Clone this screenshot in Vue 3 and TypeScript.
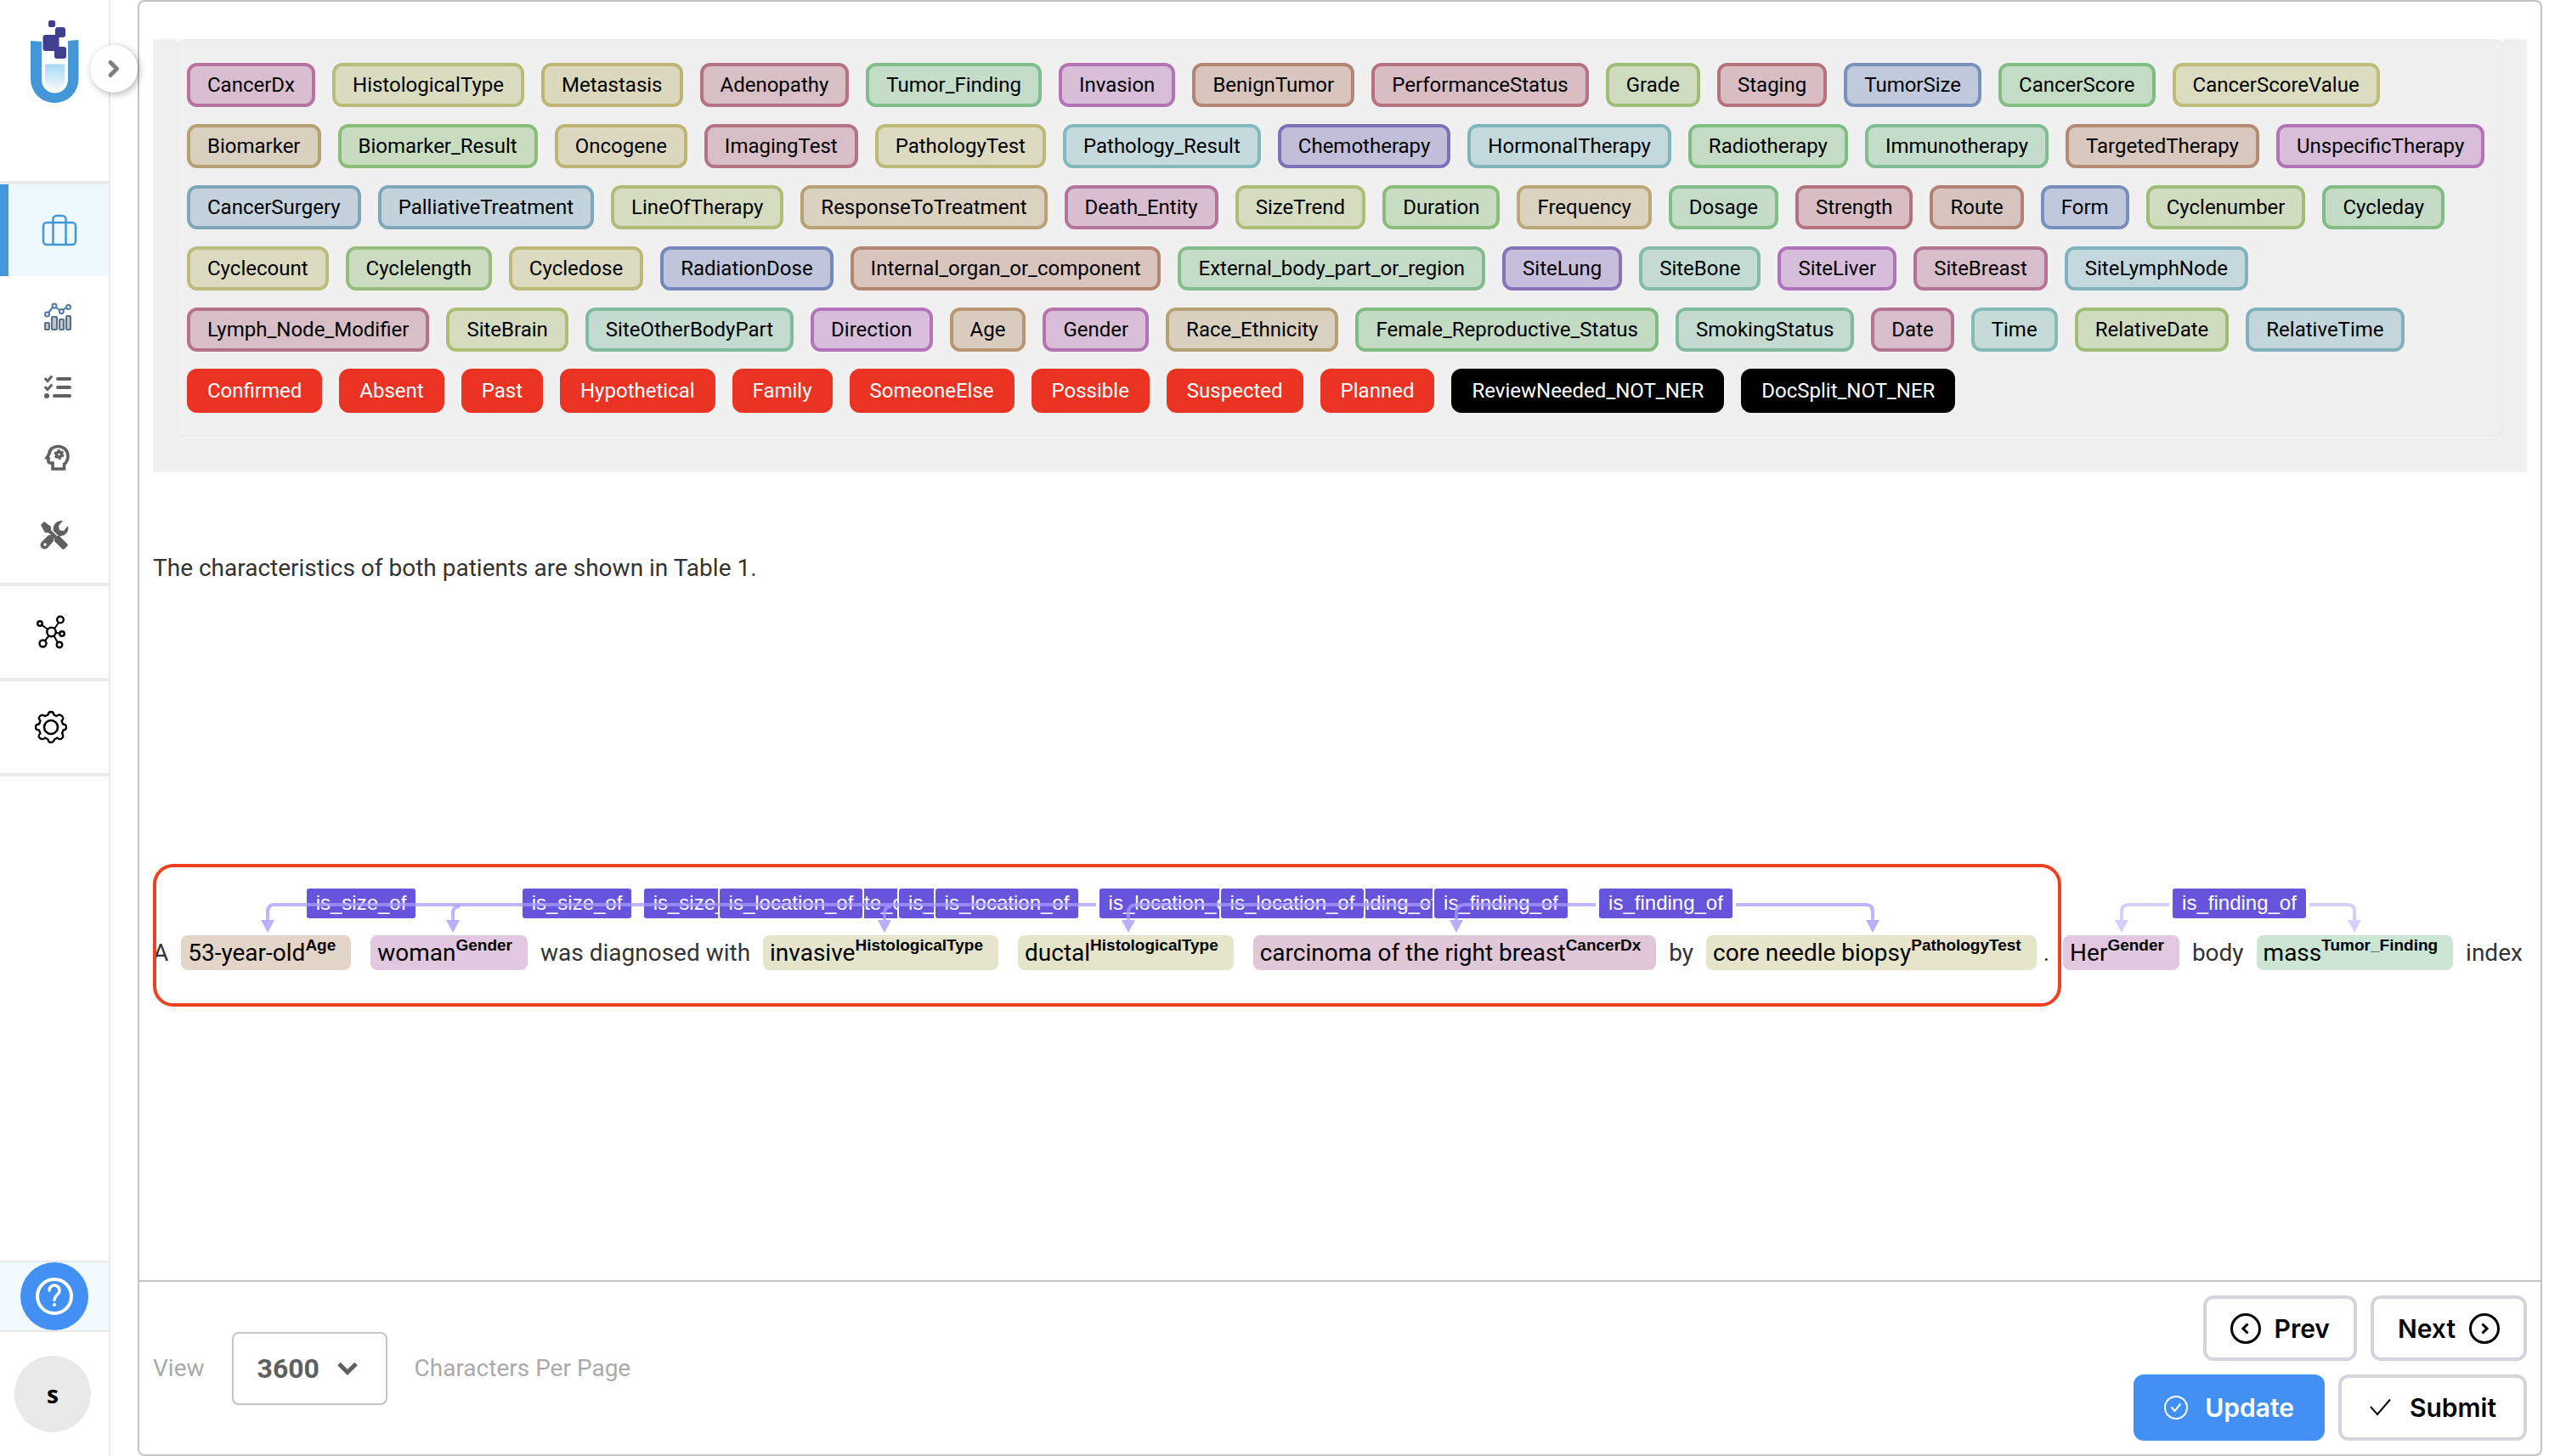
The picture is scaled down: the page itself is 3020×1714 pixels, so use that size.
<script setup lang="ts">
import { ref } from 'vue'

interface Label { name: string; tone: string }
interface Token { text: string; label?: string; tone?: string; tight?: boolean }
interface Relation { name: string; x: number; width: number }

const toLabels = (source: string): Label[] =>
  source.trim().split(/\s+/).map((entry) => {
    const [name, tone] = entry.split(':')
    return { name, tone: '#' + tone }
  })

const labels = toLabels(`
  CancerDx:b5739d HistologicalType:babd78 Metastasis:bdb574 Adenopathy:b57285 Tumor_Finding:82bd8c
  Invasion:b573b5 BenignTumor:b58573 PerformanceStatus:b5737f Grade:a0bd78 Staging:b5737c
  TumorSize:7892bd CancerScore:80bd82 CancerScoreValue:bdbd78 Biomarker:b8a075 Biomarker_Result:8cbd78
  Oncogene:bdb478 ImagingTest:b57386 PathologyTest:bdb978 Pathology_Result:82b9bd Chemotherapy:7b73b9
  HormonalTherapy:80b6bd Radiotherapy:80bd80 Immunotherapy:82bd92 TargetedTherapy:b58c73
  UnspecificTherapy:b573b7 CancerSurgery:80a6bb PalliativeTreatment:80a8bb LineOfTherapy:b0bd78
  ResponseToTreatment:b8a275 Death_Entity:b573a0 SizeTrend:acbd78 Duration:8abd7b Frequency:bba875
  Dosage:82bd8a Strength:b5737f Route:b58273 Form:788ebb Cyclenumber:a0bd78 Cycleday:82bb85
  Cyclecount:bdbb78 Cyclelength:96bd7b Cycledose:bdb978 RadiationDose:7588bb
  Internal_organ_or_component:b58573 External_body_part_or_region:82bb8c SiteLung:8673b9
  SiteBone:82bba8 SiteLiver:ae73bb SiteBreast:b57392 SiteLymphNode:80b2bd Lymph_Node_Modifier:b57388
  SiteBrain:acbd78 SiteOtherBodyPart:82bb9d Direction:b573bb Age:b89673 Gender:b573b2
  Race_Ethnicity:b8a075 Female_Reproductive_Status:80bb80 SmokingStatus:82bba0 Date:b57391
  Time:82bbb5 RelativeDate:a0bd78 RelativeTime:80b0bd
`)
const assertions = ['Confirmed', 'Absent', 'Past', 'Hypothetical', 'Family', 'SomeoneElse', 'Possible', 'Suspected', 'Planned']
const flags = ['ReviewNeeded_NOT_NER', 'DocSplit_NOT_NER']

const selected: Token[] = [
  { text: 'A' },
  { text: '53-year-old', label: 'Age', tone: '#e3d5c8' },
  { text: 'woman', label: 'Gender', tone: '#e1c7df' },
  { text: 'was diagnosed with' },
  { text: 'invasive', label: 'HistologicalType', tone: '#e4e5ca' },
  { text: 'ductal', label: 'HistologicalType', tone: '#e4e5ca' },
  { text: 'carcinoma of the right breast', label: 'CancerDx', tone: '#e1c8d8' },
  { text: 'by' },
  { text: 'core needle biopsy', label: 'PathologyTest', tone: '#e6e4cb', tight: true },
  { text: '.' },
]
const following: Token[] = [
  { text: 'Her', label: 'Gender', tone: '#e2c8e0' },
  { text: 'body' },
  { text: 'mass', label: 'Tumor_Finding', tone: '#cde5d3' },
  { text: 'index' },
]

// Later entries are painted over earlier ones.
const relations: Relation[] = [
  { name: 'is_size_of', x: 181, width: 128 },
  { name: 'is_size_of', x: 435, width: 128 },
  { name: 'is_size_of', x: 578, width: 128 },
  { name: 'is_date_of', x: 769, width: 132 },
  { name: 'is_location_of', x: 667, width: 168 },
  { name: 'is_finding_of', x: 878, width: 157 },
  { name: 'is_location_of', x: 921, width: 168 },
  { name: 'is_location_of', x: 1114, width: 168 },
  { name: 'is_finding_of', x: 1365, width: 157 },
  { name: 'is_location_of', x: 1257, width: 168 },
  { name: 'is_finding_of', x: 1508, width: 157 },
  { name: 'is_finding_of', x: 1702, width: 157 },
  { name: 'is_finding_of', x: 2377, width: 157 },
]
const heads = [135, 353, 861, 1148, 1534, 2024]
const paleHeads = [2317, 2591]

const pageSize = ref('3600')
</script>

<template>
  <div class="page">
    <aside class="sidebar">
      <a href="#" class="logo" aria-label="Home">
        <svg width="128" height="213" viewBox="0 0 128 213">
          <defs>
            <linearGradient id="tank" x1="0" y1="0" x2="0" y2="1">
              <stop offset="0" stop-color="#a6d8f5" /><stop offset="1" stop-color="#f2f9fe" />
            </linearGradient>
          </defs>
          <path d="M36 48L49 49V94a15.500 15.500 0 0 0 31 0V48L92.500 47V93a28.250 28.250 0 0 1-56.500 0Z" fill="#4397d7" />
          <path d="M53 75.500H76.300V93.500a11.650 11.650 0 0 1-23.300 0Z" fill="url(#tank)" />
          <g fill="#403f91">
            <rect x="57" y="24" width="8" height="8" rx="2" />
            <rect x="65" y="32" width="12" height="12" rx="3" />
            <rect x="50.500" y="41" width="19" height="19" rx="3" />
            <rect x="64" y="55" width="14" height="14" rx="3" />
          </g>
        </svg>
      </a>
      <nav class="nav">
        <a href="#" class="active" aria-label="Projects">
          <svg width="128" height="108" viewBox="0 0 128 108" fill="none" stroke="#4397d7" stroke-width="2.500">
            <rect x="51" y="45" width="38" height="26" rx="4" />
            <path d="M62.500 71V41a4 4 0 0 1 4-4h7a4 4 0 0 1 4 4V71" />
          </svg>
        </a>
        <div class="links">
          <a href="#" aria-label="Analytics">
            <svg width="128" height="84" viewBox="0 0 128 84" fill="none" stroke="#54708c" stroke-width="2">
              <g fill="#c4c4c8">
                <rect x="53" y="49" width="5" height="8" rx="1" /><rect x="61" y="42" width="6" height="15" rx="1" />
                <rect x="70" y="45" width="5" height="12" rx="1" /><rect x="78" y="41" width="5" height="16" rx="1" />
              </g>
              <g stroke="#4f78a6">
                <path d="M57 37l5-6M66 31l4 3M74 34l4-3" />
                <circle cx="55.500" cy="39" r="2.500" /><circle cx="64" cy="29" r="2.500" />
                <circle cx="72.300" cy="35.500" r="2.500" /><circle cx="80.500" cy="30.500" r="2.500" />
              </g>
            </svg>
          </a>
          <a href="#" aria-label="Tasks">
            <svg width="128" height="84" viewBox="0 0 128 84" fill="none" stroke="#606060" stroke-width="4" stroke-linecap="round">
              <path d="M68 31H82M68 41H82M64 51H82" />
              <path d="M53.500 31l2.500 2.500 4.500-5M53.500 41l2.500 2.500 4.500-5" stroke-width="3" />
              <circle cx="55" cy="51" r="3" fill="#606060" stroke="none" />
            </svg>
          </a>
          <a href="#" aria-label="Models">
            <svg width="128" height="84" viewBox="0 0 128 84">
              <path d="M62 53V46h-3a2 2 0 0 1-2-2V40.500l-2-.5 3-5C58 29.500 63 26.500 68.500 26.500c6.500 0 11.500 5 11.500 11.500 0 4.500-2 7.500-4.500 9.500v5.500Z" fill="none" stroke="#606060" stroke-width="3.600" />
              <circle cx="69.500" cy="36" r="3" fill="none" stroke="#606060" stroke-width="3.500" />
              <circle cx="69.500" cy="36" r="5" fill="none" stroke="#606060" stroke-width="2" stroke-dasharray="3 2.240" />
            </svg>
          </a>
          <a href="#" aria-label="Tools">
            <svg width="128" height="84" viewBox="0 0 128 84" fill="#606060">
              <path d="M48 35l4-4 8 6v4l7 7h3l9 9c1 1 1 2 0 3l-3 3c-1 1-2 1-3 0l-9-9v-3l-7-7h-4Z" />
              <path d="M74 30c-7-1-13 5-11 12l6 6c7 1 13-5 11-12l-5 6-5-1-1-5Z" />
              <path d="M60 47l3 3v4L56 62a4.800 4.800 0 0 1-7-7l8-8Z" />
              <circle cx="53" cy="58" r="1.700" fill="#fff" />
            </svg>
          </a>
        </div>
        <a href="#" class="section" aria-label="Relations">
          <svg width="128" height="108" viewBox="0 0 128 108" fill="none" stroke="#000" stroke-width="2.400">
            <circle cx="60.500" cy="54" r="5.200" /><circle cx="47" cy="44" r="2.800" /><circle cx="71" cy="39.500" r="3.800" />
            <circle cx="73" cy="56" r="2.800" /><circle cx="70" cy="69" r="3.300" /><circle cx="50.500" cy="67.500" r="4" />
            <path d="M49.500 46l7 5M69 43l-5 7M66 55l4 .5M63.500 58.500l4.500 8M57.500 58.500l-4.500 5.500" stroke-width="2" />
          </svg>
        </a>
        <a href="#" class="section" aria-label="Settings">
          <svg width="128" height="108" viewBox="0 0 128 108" fill="none" stroke="#000" stroke-width="2.600" stroke-linejoin="round">
            <circle cx="60" cy="54" r="8" />
            <path d="M56.500 39.500Q57 36 60 36T63.500 39.500L66.500 41Q70 38 73 41T72.500 46.500L74 50.500Q78 50.500 78 54T74.500 57.500L73 61.500Q75.500 64.500 73 67T67.500 66.500L64 68.500Q63 72 60 72T56.500 68.500L53 66.500Q50 69.500 47 67T47.500 61.500L46 57.500Q42 57.500 42 54T46 50.500L47.500 46.500Q44.500 43.500 47 41T53 41Z" stroke-width="2.300" />
          </svg>
        </a>
      </nav>
      <div class="help">
        <button type="button" aria-label="Help">
          <svg width="80" height="80" viewBox="0 0 80 80" fill="none" stroke="#fff" stroke-width="4" stroke-linecap="round">
            <circle cx="40" cy="40" r="20" />
            <path d="M34 33a6 6 0 1 1 10 4.500c-2.500 2-4 3.500-4 7" stroke-width="3.500" />
            <circle cx="40" cy="50" r="2" fill="#fff" stroke="none" />
          </svg>
        </button>
      </div>
      <button type="button" class="avatar">s</button>
      <button type="button" class="toggle" aria-label="Expand menu">
        <svg width="56" height="56" viewBox="0 0 56 56" fill="none" stroke="#808080" stroke-width="5" stroke-linecap="round" stroke-linejoin="round">
          <path d="M24 20.500L31.500 28L24 35.500" />
        </svg>
      </button>
    </aside>

    <main class="card">
      <section class="content">
        <div class="panel">
          <div class="labels">
            <button v-for="l in labels" :key="l.name" type="button" class="chip" :style="{ '--tone': l.tone }">{{ l.name }}</button>
            <button v-for="a in assertions" :key="a" type="button" class="chip assertion">{{ a }}</button>
            <button v-for="f in flags" :key="f" type="button" class="chip flag">{{ f }}</button>
          </div>
        </div>
        <p class="line">The characteristics of both patients are shown in Table 1.</p>
        <div class="sentence">
          <span class="selected"><template v-for="(t, i) in selected" :key="i"><mark v-if="t.label" :style="{ background: t.tone }">{{ t.text }}<sup>{{ t.label }}</sup></mark><template v-else>{{ t.text }}</template>{{ t.tight ? '' : ' ' }}</template></span>
          <span><template v-for="(t, i) in following" :key="i"><mark v-if="t.label" :style="{ background: t.tone }">{{ t.text }}<sup>{{ t.label }}</sup></mark><template v-else>{{ t.text }}</template>{{ ' ' }}</template></span>
          <svg class="relations" width="2794" height="168" viewBox="0 0 2794 168">
            <g v-for="(r, i) in relations" :key="i">
              <rect :x="r.x - 2" y="27" :width="r.width + 4" height="39" rx="4" fill="#fff" />
              <rect :x="r.x" y="29" :width="r.width" height="35" rx="3" fill="#6654dc" />
              <text :x="r.x + r.width / 2" y="54" text-anchor="middle">{{ r.name }}</text>
            </g>
            <g fill="none" stroke="#a79cff" stroke-opacity=".75" stroke-width="4">
              <path d="M135 67V56Q135 48 143 48H1110" />
              <path d="M353 67V58Q353 50 361 50" />
              <path d="M861 67V58Q861 50 869 50" />
              <path d="M1148 67V58Q1148 48 1158 48H1504" />
              <path d="M1534 67V58Q1534 48 1544 48H1698" />
              <path d="M1863 48H2016Q2024 48 2024 56V67" />
            </g>
            <path v-for="x in heads" :key="x" :d="`M${x - 8} 66H${x + 8}L${x} 81Z`" fill="#b9b0fd" />
            <g fill="none" stroke="#d5cffd" stroke-width="4">
              <path d="M2317 67V56Q2317 48 2325 48H2373M2538 48H2583Q2591 48 2591 56V67" />
            </g>
            <path v-for="x in paleHeads" :key="x" :d="`M${x - 8} 66H${x + 8}L${x} 81Z`" fill="#d5cffd" />
          </svg>
        </div>
      </section>

      <footer class="footer">
        <div class="paging">
          <label for="page-size">View</label>
          <span class="picker">
            <select id="page-size" v-model="pageSize">
              <option>3600</option>
            </select>
            <svg width="24" height="16" viewBox="0 0 24 16" fill="none" stroke="#5f5f5f" stroke-width="5">
              <path d="M2 2.500L12 12.500L22 2.500" />
            </svg>
          </span>
          <span>Characters Per Page</span>
        </div>
        <div class="actions">
          <div class="row">
            <button type="button" class="action">
              <svg width="36" height="36" viewBox="0 0 36 36" fill="none" stroke="#000" stroke-width="3">
                <circle cx="18" cy="18" r="16.500" /><path d="M20.500 12.500L15 18L20.500 23.500" />
              </svg>
              Prev
            </button>
            <button type="button" class="action">
              Next
              <svg width="36" height="36" viewBox="0 0 36 36" fill="none" stroke="#000" stroke-width="3">
                <circle cx="18" cy="18" r="16.500" /><path d="M15.500 12.500L21 18L15.500 23.500" />
              </svg>
            </button>
          </div>
          <div class="row">
            <button type="button" class="action wide primary">
              <svg width="28" height="28" viewBox="0 0 28 28" fill="none" stroke="#fff" stroke-width="2">
                <circle cx="14" cy="14" r="13" /><path d="M8.500 13.500L12.500 18L19.500 9.500" />
              </svg>
              Update
            </button>
            <button type="button" class="action wide">
              <svg width="28" height="28" viewBox="0 0 28 28" fill="none" stroke="#000" stroke-width="2">
                <path d="M2 13L10 22L25 4.500" />
              </svg>
              Submit
            </button>
          </div>
        </div>
      </footer>
    </main>
  </div>
</template>

<style>
body {
  margin: 0;
  background: #fff;
}
</style>

<style scoped>
.page {
  display: flex;
  min-height: 100vh;
  font-family: Roboto, sans-serif;
  font-size: 28px;
  color: #333;
}
.page *,
.page *::after {
  box-sizing: border-box;
}
button {
  padding: 0;
  border: 0;
  background: none;
  font: inherit;
  color: inherit;
}
svg {
  display: block;
  flex: none;
}

.sidebar {
  position: relative;
  display: flex;
  flex: none;
  flex-direction: column;
  width: 130px;
  padding-bottom: 28px;
  border-right: 2px solid #e9e9e9;
}
.nav {
  flex: 1;
}
.nav a {
  display: block;
}
.nav .active {
  position: relative;
  background: #edf8ff;
}
.active::after {
  content: '';
  position: absolute;
  inset: 0 auto 0 0;
  width: 10px;
  background: #4397d7;
}
.logo,
.links,
.nav .section {
  border-bottom: 4px solid #e9e9e9;
}
.links {
  padding: 6px 0 19px;
}
.help {
  display: flex;
  padding-left: 24px;
  border: solid #e8e8e8;
  border-width: 2px 0;
  background: #f2f9ff;
}
.help button {
  border-radius: 50%;
  background: #4290f3;
}
.avatar {
  width: 90px;
  height: 90px;
  margin: 28px 0 0 17px;
  border-radius: 50%;
  background: #e9e9e9;
  font-family: 'Open Sans', sans-serif;
  font-weight: 700;
  color: #000;
}
.toggle {
  position: absolute;
  top: 53px;
  right: -34px;
  border-radius: 50%;
  background: #fff;
  box-shadow: 2px 2px 8px rgba(0, 0, 0, 0.3);
}

.card {
  display: flex;
  flex: 1;
  flex-direction: column;
  min-width: 0;
  margin: 0 28px 0 32px;
  border: 2px solid #c4c4c4;
  border-radius: 8px;
}
.content {
  flex: 1;
  padding: 44px 16px 0;
}
.panel {
  padding: 0 28px 42px;
  border-radius: 2px;
  background: linear-gradient(#fff, #fff) no-repeat 50% 0 / calc(100% - 56px) 10px, #f0f0f0;
}
.labels {
  display: flex;
  flex-wrap: wrap;
  gap: 20px;
  padding: 26px 10px;
  border: 2px solid #ebebeb;
  border-radius: 8px;
  background: #f0f0f0;
}
.chip {
  height: 52px;
  padding: 0 20px;
  border: 4px solid var(--tone);
  border-radius: 12px;
  background: color-mix(in srgb, var(--tone) 40%, #f0f0f0);
  font-size: 24px;
  color: #000;
}
.assertion {
  --tone: #ea3323;
  background: var(--tone);
  color: #fff;
}
.flag {
  --tone: #000;
  background: var(--tone);
  color: #fff;
}
.line {
  margin: 97px 0 0;
  line-height: 32px;
}

.sentence {
  position: relative;
  display: flex;
  gap: 8px;
  height: 168px;
  margin-top: 332px;
  padding-top: 84px;
  line-height: 41px;
  white-space: nowrap;
}
.selected::after {
  content: '';
  position: absolute;
  inset: 0 auto 0 0;
  width: 2246px;
  border: 4px solid #ee4023;
  border-radius: 24px;
}
mark {
  display: inline-block;
  margin: 0 8px;
  padding: 0 18px 0 8px;
  border-radius: 8px;
  color: #000;
}
sup {
  font: 700 19px / 0 'Liberation Sans', sans-serif;
  vertical-align: 12px;
}
.relations {
  position: absolute;
  top: 0;
  left: 0;
}
.relations text {
  font: 24px 'Liberation Sans', sans-serif;
  fill: #fff;
}

.footer {
  display: flex;
  align-items: center;
  justify-content: space-between;
  padding: 16px;
  border-top: 2px solid #c4c4c4;
}
.paging {
  display: flex;
  align-items: center;
  gap: 32px;
  color: #aaa;
}
.picker {
  position: relative;
  display: flex;
  align-items: center;
}
select {
  width: 183px;
  height: 86px;
  padding: 0 0 0 28px;
  border: 2px solid #c4c4c4;
  border-radius: 8px;
  background: #fff;
  font: 700 32px Roboto, sans-serif;
  color: #5f5f5f;
  appearance: none;
}
.picker svg {
  position: absolute;
  right: 35px;
  pointer-events: none;
}
.actions {
  display: flex;
  flex-direction: column;
  gap: 16px;
}
.row {
  display: flex;
  justify-content: flex-end;
  gap: 16px;
}
.action {
  display: flex;
  align-items: center;
  gap: 16px;
  height: 77px;
  padding: 0 28px;
  border: 4px solid #d4d5dc;
  border-radius: 12px;
  font: 600 30px Inter, sans-serif;
  color: #000;
}
.wide {
  gap: 20px;
  height: 78px;
  padding: 0 32px;
}
.primary {
  border-color: #4290f3;
  background: #4290f3;
  color: #fff;
}
</style>
